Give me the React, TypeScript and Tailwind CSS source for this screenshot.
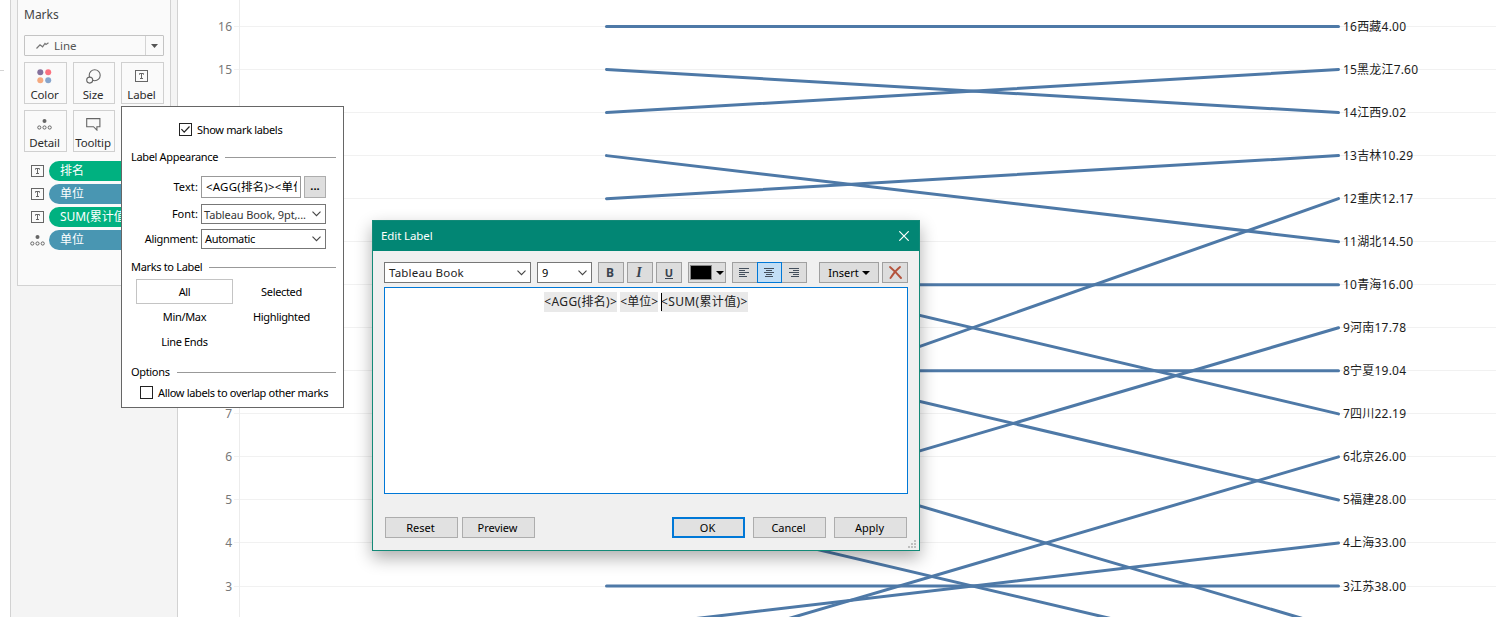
import type { ReactNode } from "react";

const LABELS: [number, string][] = [
  [16, "16西藏4.00"],
  [15, "15黑龙江7.60"],
  [14, "14江西9.02"],
  [13, "13吉林10.29"],
  [12, "12重庆12.17"],
  [11, "11湖北14.50"],
  [10, "10青海16.00"],
  [9, "9河南17.78"],
  [8, "8宁夏19.04"],
  [7, "7四川22.19"],
  [6, "6北京26.00"],
  [5, "5福建28.00"],
  [4, "4上海33.00"],
  [3, "3江苏38.00"],
];

const AXIS_RANKS = [16, 15, 7, 6, 5, 4, 3];

// [rank on the left, rank on the right]
const LINES = [
  [16, 16], [15, 14], [14, 15], [13, 11], [12, 13], [11, 7], [10, 10], [9, 5],
  [8, 8], [7, 2], [6, 12], [5, 1], [4, 9], [3, 3], [2, 4], [1, 6],
];

const LABEL_WIDTHS: Record<number, number> = {
  16: 63, 15: 75, 14: 63, 13: 70, 12: 70, 11: 70, 10: 70,
};

const rowY = (rank: number) => 26.5 + (16 - rank) * 43.04;

function Chart() {
  return (
    <svg width="1319" height="617" viewBox="178 0 1319 617" className="block shrink-0 bg-white">
      {LABELS.map(([r]) => (
        <rect key={r} x="234" y={Math.floor(rowY(r))} width="1262" height="1" fill="#f1f1f1" />
      ))}
      <rect x="239" y="0" width="1" height="617" fill="#ececec" />
      {AXIS_RANKS.map((r) => (
        <text key={r} x="232" y={rowY(r) + 4.5} textAnchor="end" fontSize="12" fill="#787878" textLength={r > 9 ? 14 : 7}>
          {r}
        </text>
      ))}
      {LINES.map(([a, b]) => (
        <line key={a} x1="606.5" y1={rowY(a)} x2="1338.5" y2={rowY(b)} stroke="#4e79a7" strokeWidth="3" strokeLinecap="round" />
      ))}
      {LABELS.map(([r, label]) => (
        <text key={r} x="1343" y={rowY(r) + 4.5} fontSize="12" fill="#1c1c1c" textLength={LABEL_WIDTHS[r] ?? 63}>
          {label}
        </text>
      ))}
    </svg>
  );
}

function TextIcon() {
  return (
    <svg width="13" height="12" viewBox="0 0 13 12" fill="none" stroke="#666">
      <rect x="0.5" y="0.5" width="12" height="11" />
      <path d="M4.500 4.700V3.500h4v1.200M6.500 3.500v5M5 8.500h3" />
    </svg>
  );
}

function DetailIcon() {
  return (
    <svg width="15" height="11" viewBox="0 0 15 11" fill="none" stroke="#666">
      <circle cx="7.5" cy="2" r="2" fill="#666" stroke="none" />
      <circle cx="2.3" cy="8.5" r="1.6" />
      <circle cx="7.5" cy="8.5" r="1.6" />
      <circle cx="12.7" cy="8.5" r="1.6" />
    </svg>
  );
}

function MarkButton({ label, children }: { label: string; children: ReactNode }) {
  return (
    <div className="flex h-[42px] flex-col items-center border border-[#d0d0d0] bg-[#fafafa] pr-[2px]">
      <div className="flex h-[26px] shrink-0 items-center">{children}</div>
      <span className="text-[11.5px] leading-[12px] tracking-[-0.15px] text-[#2c2c2c]">{label}</span>
    </div>
  );
}

function Pill({ label, color, icon }: { label: string; color: string; icon: ReactNode }) {
  return (
    <div className="flex h-5 items-center">
      <div className="flex w-[25px] shrink-0 justify-center pl-[2px]">{icon}</div>
      <div className={`flex h-5 flex-1 items-center rounded-l-full pl-[11px] text-[12px] leading-none whitespace-nowrap text-white ${color}`}>
        {label}
      </div>
    </div>
  );
}

function MarksPanel() {
  return (
    <div className="flex w-[178px] shrink-0 bg-white">
      <div className="h-[71px] w-[4px] border-b border-[#d4d4d4]" />
      <div className="ml-[6px] w-[168px] border-x border-[#d2d2d2] bg-[#f4f4f4] px-[6px]">
        <div className="h-[286px] border-x border-b border-[#d2d2d2] bg-[#fafafa]">
          <div className="px-[6px] pt-[8px] text-[12px] leading-[14px] text-[#444]">Marks</div>
          <div className="mt-[13px] ml-[6px] flex h-[21px] w-[140px] items-center rounded-[1px] border border-[#c4c4c4]">
            <svg width="13" height="8" viewBox="0 0 13 8" className="ml-[11px]" fill="none" stroke="#777" strokeWidth="1.2">
              <path d="M.5 6.500L4 2.800l2.600 2L9 1.500l1 .9L12.500.7" />
            </svg>
            <span className="ml-[5px] flex-1 pt-[1px] text-[11.5px] text-[#555]">Line</span>
            <div className="flex h-[19px] w-[18px] items-center justify-center border-l border-[#d4d4d4]">
              <svg width="7" height="4" viewBox="0 0 7 4"><path d="M0 0h7L3.5 4z" fill="#555" /></svg>
            </div>
          </div>
          <div className="mt-[6px] ml-[6px] grid w-[140px] grid-cols-[43px_42px_43px] gap-[6px]">
            <MarkButton label="Color">
              <svg width="15" height="15" viewBox="0 0 15 15">
                <circle cx="3.3" cy="3.3" r="3" fill="#85719c" /><circle cx="11.2" cy="3.3" r="3" fill="#fc717f" />
                <circle cx="3.3" cy="11.2" r="3" fill="#f5a97f" /><circle cx="11.2" cy="11.2" r="3" fill="#87a5cc" />
              </svg>
            </MarkButton>
            <MarkButton label="Size">
              <svg width="15" height="15" viewBox="0 0 15 15" fill="none" stroke="#666" strokeWidth="1.1">
                <circle cx="8.7" cy="6.2" r="5.5" /><circle cx="3.7" cy="11.1" r="3" fill="#fafafa" />
              </svg>
            </MarkButton>
            <MarkButton label="Label"><TextIcon /></MarkButton>
            <MarkButton label="Detail"><DetailIcon /></MarkButton>
            <MarkButton label="Tooltip">
              <svg width="15" height="13" viewBox="0 0 15 13" fill="none" stroke="#666" strokeWidth="1.1">
                <path d="M.7.6h13.2v8.100h-3v3.400L7.500 8.700H.7z" />
              </svg>
            </MarkButton>
          </div>
          <div className="mt-[9px] ml-[6px] flex flex-col gap-[3px]">
            <Pill label="排名" color="bg-[#00b180]" icon={<TextIcon />} />
            <Pill label="单位" color="bg-[#4996b2]" icon={<TextIcon />} />
            <Pill label="SUM(累计值)" color="bg-[#00b180]" icon={<TextIcon />} />
            <Pill label="单位" color="bg-[#4996b2]" icon={<DetailIcon />} />
          </div>
        </div>
      </div>
    </div>
  );
}

function Chevron() {
  return (
    <svg width="9" height="6" viewBox="0 0 9 6" className="shrink-0" fill="none" stroke="#444" strokeWidth="1.1">
      <path d="M.5.7l4 4 4-4" />
    </svg>
  );
}

function Heading({ children }: { children: string }) {
  return (
    <div className="flex h-[10px] items-center">
      <span className="whitespace-nowrap">{children}</span>
      <div className="ml-[7px] h-px flex-1 bg-[#999]" />
    </div>
  );
}

function LabelPopup() {
  return (
    <div className="absolute top-[106px] left-[121px] h-[302px] w-[223px] border border-[#666] bg-white pr-[7px] pl-[9px] text-[11px] leading-[14px] tracking-[-0.33px] text-black">
      <div className="flex h-[45px] items-center pl-[48px]">
        <svg width="13" height="13" viewBox="0 0 13 13" fill="none" stroke="#222">
          <rect x="0.5" y="0.5" width="12" height="12" />
          <path d="M2.4 6.2l2.8 3 5.3-5.7" strokeWidth="1.2" />
        </svg>
        <span className="ml-[5px]">Show mark labels</span>
      </div>
      <Heading>Label Appearance</Heading>
      <div className="mt-[14px] flex h-[22px] items-center">
        <span className="w-[67px] text-right tracking-[0.1px]">Text:</span>
        <div className="ml-[3px] flex h-[22px] w-[100px] items-center border border-[#999] px-[3px]">
          <span className="overflow-hidden pl-[1px] text-[11.5px] tracking-[0.2px] whitespace-nowrap">&lt;AGG(排名)&gt;&lt;单位</span>
        </div>
        <div className="ml-[3px] flex h-[22px] w-[22px] justify-center border border-[#adadad] bg-[#dedede] leading-[18px] font-bold tracking-normal">...</div>
      </div>
      <div className="mt-[6px] flex h-[20px] items-center">
        <span className="w-[67px] text-right tracking-[0px]">Font:</span>
        <div className="ml-[3px] flex h-[20px] w-[125px] items-center justify-between border border-[#777] pr-[4px] pl-[2px]">
          <span className="pt-[2px] tracking-[-0.1px] whitespace-nowrap text-[#333]">Tableau Book, 9pt,...</span><Chevron />
        </div>
      </div>
      <div className="mt-[5px] flex h-[20px] items-center">
        <span className="w-[67px] text-right">Alignment:</span>
        <div className="ml-[3px] flex h-[20px] w-[125px] items-center justify-between border border-[#777] pr-[4px] pl-[3px]">
          <span>Automatic</span><Chevron />
        </div>
      </div>
      <div className="h-[13px]" />
      <Heading>Marks to Label</Heading>
      <div className="mt-[7px] ml-[5px] grid w-[194px] grid-cols-2 grid-rows-[25px_25px_25px] items-center text-center">
        <span className="flex h-[25px] items-center justify-center border border-[#c4c4c4]">All</span>
        <span>Selected</span><span>Min/Max</span><span>Highlighted</span><span>Line Ends</span>
      </div>
      <div className="h-[13px]" />
      <Heading>Options</Heading>
      <div className="mt-[9px] flex h-[13px] items-center pl-[9px]">
        <div className="h-[13px] w-[13px] shrink-0 border border-[#222]" />
        <span className="ml-[5px] whitespace-nowrap">Allow labels to overlap other marks</span>
      </div>
    </div>
  );
}

function ToolButton({ children, className }: { children: ReactNode; className: string }) {
  return (
    <div className={`flex h-[21px] shrink-0 items-center justify-center border border-[#a0a0a0] bg-[#dddddd] ${className}`}>{children}</div>
  );
}

function AlignIcon({ d }: { d: string }) {
  return <svg width="11" height="9" viewBox="0 0 11 9" stroke="#444f5c"><path d={d} /></svg>;
}

function DialogButton({ children, className }: { children: string; className: string }) {
  return (
    <div className={`flex h-[21px] w-[73px] items-center justify-center bg-[#e1e1e1] pt-[1px] pr-[2px] ${className}`}>{children}</div>
  );
}

function EditLabelDialog() {
  return (
    <div className="absolute top-[220px] left-[372px] flex h-[331px] w-[548px] flex-col border border-[#138a78] bg-[#f0f0f0] text-[11px] text-black shadow-[0_7px_16px_rgba(0,0,0,0.32)]">
      <div className="flex h-[30px] items-center justify-between bg-[#028674] pr-[10px] pl-[8px] text-white">
        <span className="text-[11.5px] tracking-[-0.1px]">Edit Label</span>
        <svg width="10" height="10" viewBox="0 0 10 10" className="-mt-px" stroke="white" strokeWidth="1.2"><path d="M.3.3l9.4 9.4M9.7.3L.3 9.7" /></svg>
      </div>
      <div className="mt-[11px] ml-[11px] flex h-[21px]">
        <div className="flex w-[147px] items-center justify-between border border-[#777] bg-white px-[4px]">
          <span className="pt-[1px] text-[11.5px] tracking-[0.2px] text-[#222]">Tableau Book</span><Chevron />
        </div>
        <div className="ml-[6px] flex w-[55px] items-center justify-between border border-[#777] bg-white px-[4px]">
          <span className="pt-[1px]">9</span><Chevron />
        </div>
        <ToolButton className="ml-[6px] w-[26px] pr-[2px] text-[12px] font-bold text-[#3a4450]">B</ToolButton>
        <ToolButton className="ml-[3px] w-[26px] pr-[2px] text-[#3a4450]">
          <i className="font-['Liberation_Serif',serif] text-[14px] font-bold">I</i>
        </ToolButton>
        <ToolButton className="ml-[3px] w-[26px] text-[11px] font-bold text-[#3a4450]">
          <span className="border-b border-[#3a4450] leading-[11px]">U</span>
        </ToolButton>
        <ToolButton className="ml-[6px] w-[38px] gap-[4px]">
          <div className="h-[15px] w-[22px] border border-[#888] bg-black" />
          <svg width="8" height="4" viewBox="0 0 8 4"><path d="M0 0h8L4 4z" /></svg>
        </ToolButton>
        <ToolButton className="ml-[6px] w-[26px] pr-[2px]"><AlignIcon d="M0 .5h10M0 2.5h6M0 4.5h10M0 6.5h6M0 8.5h8" /></ToolButton>
        <div className="z-10 -ml-px flex h-[21px] w-[25px] items-center justify-center border border-[#0078d7] bg-[#c2def5] pr-[1px]">
          <AlignIcon d="M0 .5h10M2 2.5h6M0 4.5h10M2 6.5h6M1 8.5h8" />
        </div>
        <ToolButton className="-ml-px w-[26px] pr-[2px]"><AlignIcon d="M1 .5h10M5 2.5h6M1 4.5h10M5 6.5h6M3 8.5h8" /></ToolButton>
        <ToolButton className="ml-[12px] w-[60px] gap-[3px]">
          <span className="pt-[1px]">Insert</span><svg width="8" height="4" viewBox="0 0 8 4"><path d="M0 0h8L4 4z" /></svg>
        </ToolButton>
        <ToolButton className="ml-[3px] w-[26px]">
          <svg width="13" height="13" viewBox="0 0 13 13" fill="none" stroke="#b4533c" strokeLinecap="round">
            <path d="M1 1c3 2.500 7.500 7 11 11" strokeWidth="1.900" /><path d="M11 1C7 4 4 8 1.500 12" strokeWidth="1.900" />
          </svg>
        </ToolButton>
      </div>
      <div className="mt-[4px] ml-[11px] flex h-[207px] w-[524px] justify-center gap-[3px] border border-[#0078d7] bg-white pt-[4px] text-[12px] leading-[20px] tracking-[0.35px] whitespace-nowrap text-[#222]">
        <span className="h-[20px] bg-[#e9e9e9]">&lt;AGG(排名)&gt;</span>
        <span className="h-[20px] bg-[#e9e9e9] tracking-normal">&lt;单位&gt;</span>
        <span className="flex h-[20px] items-center bg-[#e9e9e9]"><i className="-mr-px h-[18px] w-px bg-black" />&lt;SUM(累计值)&gt;</span>
      </div>
      <div className="mt-[23px] ml-[12px] flex">
        <DialogButton className="border border-[#adadad]">Reset</DialogButton>
        <DialogButton className="ml-[4px] border border-[#adadad]">Preview</DialogButton>
        <DialogButton className="ml-[137px] border-2 border-[#0078d7]">OK</DialogButton>
        <DialogButton className="ml-[8px] border border-[#adadad]">Cancel</DialogButton>
        <DialogButton className="ml-[8px] border border-[#adadad]">Apply</DialogButton>
      </div>
      <svg width="8" height="8" viewBox="0 0 8 8" className="mt-[2px] mr-[3px] self-end" fill="#bfbfbf">
        <path d="M6 0h2v2H6zM3 3h2v2H3zM6 3h2v2H6zM0 6h2v2H0zM3 6h2v2H3zM6 6h2v2H6z" />
      </svg>
    </div>
  );
}

export default function App() {
  return (
    <div className="relative flex h-[617px] w-[1497px] overflow-hidden bg-white font-['Noto_Sans','Noto_Sans_CJK_SC',sans-serif]">
      <MarksPanel />
      <Chart />
      <LabelPopup />
      <EditLabelDialog />
    </div>
  );
}
